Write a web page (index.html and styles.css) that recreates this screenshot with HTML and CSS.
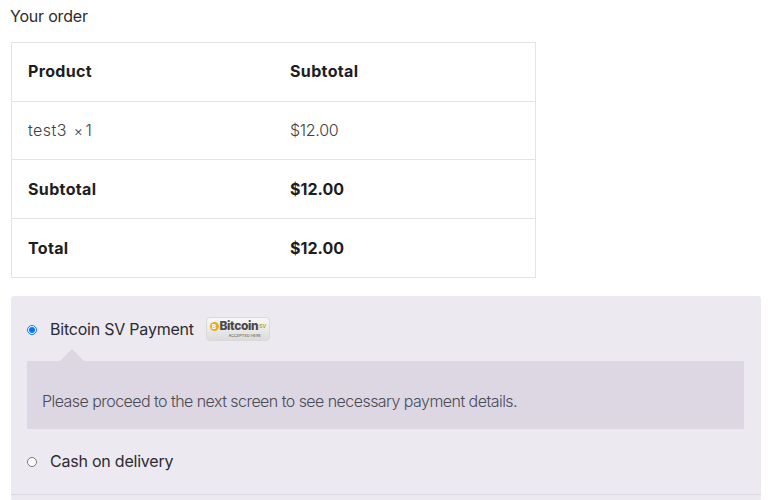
FILE: index.html
```html
<!DOCTYPE html>
<html lang="en">
<head>
    <meta charset="UTF-8">
    <meta name="viewport" content="width=device-width, initial-scale=1.0">
    <title>Checkout</title>
    <link rel="stylesheet" href="styles.css">
</head>
<body>
    <h3 class="order-title">Your order</h3>

    <!-- Order table -->
    <table class="order-table">
        <thead>
            <tr>
                <th class="col-product">Product</th>
                <th>Subtotal</th>
            </tr>
        </thead>
        <tbody>
            <tr>
                <td class="item">test3 <span class="qty"><span class="times">×</span>1</span></td>
                <td class="price">$12.00</td>
            </tr>
        </tbody>
        <tfoot>
            <tr>
                <th>Subtotal</th>
                <th class="amount">$12.00</th>
            </tr>
            <tr>
                <th>Total</th>
                <th class="amount">$12.00</th>
            </tr>
        </tfoot>
    </table>

    <!-- Payment methods -->
    <div class="payment">
        <div class="method">
            <input class="method-radio" type="radio" name="pay" checked>
            <label class="method-label">Bitcoin SV Payment</label>
            <span class="badge">
                <span class="badge-top">
                    <span class="coin">B</span><span class="badge-name">Bitcoin</span><span class="badge-sv">SV</span>
                </span>
                <span class="badge-sub">ACCEPTED HERE</span>
            </span>
        </div>
        <div class="method-box">
            <p>Please proceed to the next screen to see necessary payment details.</p>
        </div>
        <div class="method method-cod">
            <input class="method-radio" type="radio" name="pay">
            <label class="method-label">Cash on delivery</label>
        </div>
        <div class="payment-end"></div>
    </div>
</body>
</html>
```

FILE: styles.css
```css
body {
    font-family: Inter, "Noto Sans", sans-serif;
    font-size: 16px;
    margin: 0;
    padding: 0 11px;
    color: #2a2a2e;
    background-color: #fff;
    height: 500px;
    overflow: hidden;
}

.order-title {
    font-size: 16px;
    font-weight: 400;
    line-height: 32px;
    margin: 0 0 10px -1px;
    letter-spacing: -0.2px;
}

/* Order table */
.order-table {
    width: 525px;
    border-collapse: separate;
    border-spacing: 0;
    border: 1px solid #e4e4e4;
    border-width: 1px 1px 0 1px;
    margin-bottom: 18px;
}

.order-table th,
.order-table td {
    height: 58px;
    padding: 0 16px 2px;
    box-sizing: border-box;
    text-align: left;
    border-bottom: 1px solid #e4e4e4;
}

.order-table th {
    font-weight: 700;
    color: #1d1d22;
    letter-spacing: 0.35px;
    height: 59px;
}

.order-table tfoot th {
    padding-bottom: 0;
}

.order-table .amount {
    letter-spacing: 0.05px;
}

.order-table td {
    font-weight: 300;
    color: #404044;
}

.col-product {
    width: 262px;
}

.order-table .item {
    letter-spacing: 0.45px;
}

.price {
    letter-spacing: -0.3px;
}

.qty {
    margin-left: 2px;
}

.times {
    font-size: 14px;
    margin-right: 2px;
}

/* Payment methods */
.payment {
    width: 750px;
    background-color: #ece9f0;
    border-radius: 3px;
    overflow: hidden;
}

.method {
    display: flex;
    align-items: center;
    height: 65px;
    padding-left: 16px;
    box-sizing: border-box;
}

.method-radio {
    width: 10px;
    height: 10px;
    margin: 2px 13px 0 0;
    flex: none;
}

.method-label {
    letter-spacing: -0.22px;
    color: #2b2b33;
}

.badge {
    display: flex;
    flex-direction: column;
    align-items: center;
    justify-content: center;
    width: 64px;
    height: 24px;
    margin: 1px 0 0 12px;
    border: 1px solid #d9d9d9;
    border-radius: 4px;
    background: linear-gradient(#f8f8f8, #dcdcdc);
    box-sizing: border-box;
}

.badge-top {
    display: flex;
    align-items: center;
    line-height: 12px;
}

.coin {
    width: 9px;
    height: 9px;
    border-radius: 50%;
    background-color: #e8ad1f;
    margin-right: 1px;
    font-size: 6px;
    font-weight: 700;
    line-height: 9px;
    text-align: center;
    color: #fff;
}

.badge-name {
    font-size: 12px;
    font-weight: 800;
    letter-spacing: -0.4px;
    color: #4a4a4a;
}

.badge-sv {
    font-size: 5px;
    font-weight: 700;
    color: #c8a22a;
    margin-left: 1px;
}

.badge-sub {
    font-size: 4px;
    line-height: 5px;
    color: #555;
    margin: 1px 0 0 14px;
}

.method-box {
    position: relative;
    height: 68px;
    margin: 0 17px 0 16px;
    padding: 0 15px;
    background-color: #dcd7e3;
    display: flex;
    align-items: center;
}

/* little arrow on top of the box */
.method-box::before {
    content: "";
    position: absolute;
    left: 33px;
    top: -12px;
    border: 12px solid transparent;
    border-top: 0;
    border-bottom-color: #dcd7e3;
}

.method-box p {
    margin: 12px 0 0;
    font-weight: 300;
    letter-spacing: -0.55px;
    color: #4b4b55;
}

.method-cod {
    padding-bottom: 2px;
}

.payment-end {
    border-top: 1px solid #dcd7e3;
    height: 6px;
}
```
